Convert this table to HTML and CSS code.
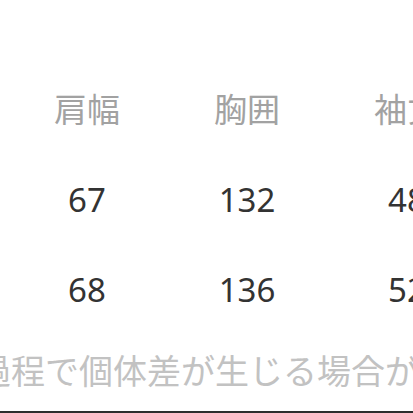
FILE: index.html
```html
<!DOCTYPE html>
<html lang="ja">
<head>
<meta charset="utf-8">
<link rel="stylesheet" href="styles.css">
</head>
<body>
<div class="page">
  <div class="table">
    <div class="cell head">肩幅</div>
    <div class="cell head">胸囲</div>
    <div class="cell head">袖丈</div>
    <div class="cell num">67</div>
    <div class="cell num">132</div>
    <div class="cell num">48</div>
    <div class="cell num">68</div>
    <div class="cell num">136</div>
    <div class="cell num">52</div>
  </div>
  <div class="note">製造過程で個体差が生じる場合がございます</div>
  <div class="rule"></div>
</div>
</body>
</html>
```

FILE: styles.css
```css
html, body {
  margin: 0;
  padding: 0;
  background: #ffffff;
}
body {
  width: 413px;
  height: 413px;
  overflow: hidden;
}
.page {
  width: 413px;
  height: 413px;
  overflow: hidden;
  padding-top: 63px;
  box-sizing: border-box;
  font-family: "Noto Sans", "Noto Sans CJK JP", sans-serif;
}
.table {
  display: grid;
  grid-template-columns: repeat(3, 160px);
  grid-template-rows: 92px 90px 90px;
  margin-left: 7px;
  width: 480px;
}
.cell {
  text-align: center;
  white-space: nowrap;
}
.head {
  font-family: "Noto Sans CJK JP", sans-serif;
  font-size: 33px;
  line-height: 90px;
  color: #a2a2a2;
}
.num {
  font-size: 33px;
  line-height: 90px;
  color: #333333;
}
.note {
  height: 76px;
  line-height: 70px;
  font-family: "Noto Sans CJK JP", sans-serif;
  font-size: 34px;
  color: #c2c2c2;
  white-space: nowrap;
  margin-left: -91px;
}
.rule {
  height: 2px;
  background: #2e2e2e;
}
```
